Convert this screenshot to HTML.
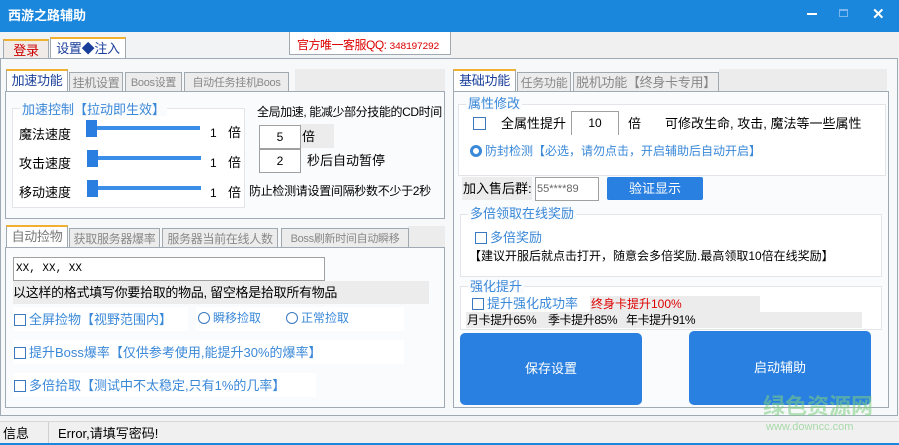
<!DOCTYPE html>
<html><head><meta charset="utf-8"><style>
*{margin:0;padding:0;box-sizing:border-box}
body{width:899px;height:445px;position:relative;overflow:hidden;background:#f0f0f0;font-family:"Liberation Sans","Noto Sans CJK SC",sans-serif;font-size:12px;color:#000}
.a{position:absolute;white-space:nowrap;line-height:1}
.b{position:absolute}
.tab{position:absolute;border:1px solid #a0a8b0;border-bottom:none;background:#ececec;color:#888;font-size:12px;text-align:center;line-height:20px;white-space:nowrap;overflow:hidden;letter-spacing:-0.3px}
.sel{background:#fff;border-top:2px solid #f0b030;color:#1a3f9a;font-size:13px}
.box{position:absolute;border:1px solid #a0aab4;background:#fafbfd}
.grp{position:absolute;border:1px solid #e2e6ea;background:#fff}
.lb{color:#3a88d8}
.cb{display:inline-block;width:12px;height:12px;border:1px solid #3a78c0;vertical-align:-2px;margin-right:3px;background:#fff}
.rd{display:inline-block;width:12px;height:12px;border:1px solid #3a78c0;border-radius:50%;vertical-align:-2px;margin-right:3px}
.sl{position:absolute;height:4px;background:#3a8ee8}
.th{position:absolute;width:11px;height:17px;background:#2a7ee0}
.in{position:absolute;border:1px solid #a0a0a0;background:#fff;text-align:center;line-height:22px}
.btn{position:absolute;background:#2a80e0;color:#fff;border-radius:5px;text-align:center}
</style></head><body>
<div class="b" style="left:0;top:0;width:899px;height:32px;background:#1a86dc"></div>
<div class="a" style="left:8px;top:9px;color:#fff;font-size:13px;font-weight:bold">西游之路辅助</div>
<div class="b" style="left:807px;top:13px;width:10px;height:2px;background:#fff"></div>
<div class="b" style="left:839px;top:9px;width:9px;height:8px;border:1px solid #7cb6ee;border-top-width:2px"></div>
<div class="a" style="left:872px;top:7px;color:#fff;font-size:15px;font-weight:bold">✕</div>
<div class="b" style="left:0;top:32px;width:899px;height:390px;background:#f2f3f5"></div>
<div class="tab" style="left:3px;top:39px;width:46px;height:20px;color:#c00;font-size:13px;background:#f0ebe6;border-top:2px solid #f0b030">登录</div>
<div class="tab sel" style="left:50px;top:37px;width:76px;height:22px;color:#1a3f9a">设置◆注入</div>
<div class="b" style="left:289px;top:32px;width:162px;height:23px;background:#fff;border:1px solid #a0a8b0;border-top:none"></div>
<div class="a" style="left:297px;top:39px;color:#d00;font-size:12px;letter-spacing:-0.5px">官方唯一客服QQ: <span style="font-family:'Liberation Mono',monospace;font-size:10px">348197292</span></div>
<div class="b" style="left:451px;top:32px;width:448px;height:26px;background:#f0f0f0"></div>
<div class="box" style="left:0;top:58px;width:898px;height:358px;background:#f7f8fa"></div>
<!-- left top -->
<div class="b" style="left:295px;top:69px;width:150px;height:22px;background:#ececec"></div>
<div class="tab sel" style="left:6px;top:69px;width:62px;height:23px">加速功能</div>
<div class="tab" style="left:69px;top:72px;width:54px;height:20px">挂机设置</div>
<div class="tab" style="left:125px;top:72px;width:57px;height:20px;font-size:11px">Boos设置</div>
<div class="tab" style="left:184px;top:72px;width:105px;height:20px;font-size:11px">自动任务挂机Boos</div>
<div class="box" style="left:5px;top:91px;width:440px;height:128px"></div>
<div class="grp" style="left:12px;top:108px;width:233px;height:100px"></div>
<div class="a lb" style="left:20px;top:103px;font-size:13px;background:#fafbfd;padding:0 2px">加速控制【拉动即生效】</div>
<div class="a" style="left:19px;top:128px;font-size:13px">魔法速度</div>
<div class="a" style="left:19px;top:157px;font-size:13px">攻击速度</div>
<div class="a" style="left:19px;top:186px;font-size:13px">移动速度</div>
<div class="sl" style="left:86px;top:126px;width:114px"></div><div class="th" style="left:86px;top:120px"></div>
<div class="sl" style="left:87px;top:156px;width:114px"></div><div class="th" style="left:87px;top:150px"></div>
<div class="sl" style="left:87px;top:186px;width:114px"></div><div class="th" style="left:87px;top:180px"></div>
<div class="a" style="left:210px;top:127px">1</div><div class="a" style="left:228px;top:126px;font-size:13px">倍</div>
<div class="a" style="left:210px;top:157px">1</div><div class="a" style="left:228px;top:156px;font-size:13px">倍</div>
<div class="a" style="left:210px;top:187px">1</div><div class="a" style="left:228px;top:186px;font-size:13px">倍</div>
<div class="a" style="left:257px;top:106px;font-size:12px;letter-spacing:-0.4px">全局加速, 能减少部分技能的CD时间</div>
<div class="b" style="left:300px;top:124px;width:34px;height:24px;background:#ececec"></div>
<div class="in" style="left:259px;top:125px;width:42px;height:24px">5</div>
<div class="a" style="left:302px;top:130px;font-size:13px">倍</div>
<div class="in" style="left:259px;top:149px;width:42px;height:24px">2</div>
<div class="a" style="left:307px;top:154px;font-size:13px">秒后自动暂停</div>
<div class="a" style="left:249px;top:185px;font-size:12px;letter-spacing:-0.3px">防止检测请设置间隔秒数不少于2秒</div>
<!-- left bottom -->
<div class="b" style="left:408px;top:226px;width:37px;height:22px;background:#ececec"></div>
<div class="tab sel" style="left:6px;top:225px;width:62px;height:23px;color:#777">自动捡物</div>
<div class="tab" style="left:69px;top:228px;width:91px;height:20px">获取服务器爆率</div>
<div class="tab" style="left:162px;top:228px;width:116px;height:20px">服务器当前在线人数</div>
<div class="tab" style="left:281px;top:228px;width:128px;height:20px;font-size:11px">Boss刷新时间自动瞬移</div>
<div class="box" style="left:5px;top:247px;width:440px;height:161px"></div>
<div class="in" style="left:13px;top:257px;width:312px;height:24px;text-align:left;padding-left:2px;font-family:'Liberation Mono',monospace;font-size:11px">XX, XX, XX</div>
<div class="b" style="left:13px;top:281px;width:416px;height:23px;background:#ececec"></div>
<div class="a" style="left:13px;top:286px;font-size:13px;letter-spacing:-0.3px">以这样的格式填写你要拾取的物品, 留空格是拾取所有物品</div>
<div class="b" style="left:13px;top:307px;width:175px;height:24px;background:#fff"></div>
<div class="b" style="left:196px;top:307px;width:208px;height:24px;background:#fff"></div>
<div class="a lb" style="left:14px;top:313px;font-size:13px"><span class="cb"></span>全屏捡物【视野范围内】</div>
<div class="a lb" style="left:198px;top:312px;font-size:12px"><span class="rd"></span>瞬移捡取</div>
<div class="a lb" style="left:286px;top:312px;font-size:12px"><span class="rd"></span>正常捡取</div>
<div class="b" style="left:13px;top:340px;width:391px;height:24px;background:#fff"></div>
<div class="a lb" style="left:14px;top:346px;font-size:13px"><span class="cb"></span>提升Boss爆率【仅供参考使用,能提升30%的爆率】</div>
<div class="b" style="left:13px;top:373px;width:303px;height:24px;background:#fff"></div>
<div class="a lb" style="left:14px;top:379px;font-size:13px"><span class="cb"></span>多倍拾取【测试中不太稳定,只有1%的几率】</div>
<!-- right -->
<div class="b" style="left:719px;top:69px;width:168px;height:22px;background:#ececec"></div>
<div class="tab sel" style="left:453px;top:69px;width:63px;height:23px">基础功能</div>
<div class="tab" style="left:517px;top:72px;width:54px;height:20px">任务功能</div>
<div class="tab" style="left:573px;top:72px;width:146px;height:20px;font-size:13px">脱机功能【终身卡专用】</div>
<div class="box" style="left:453px;top:91px;width:436px;height:317px"></div>
<div class="grp" style="left:458px;top:104px;width:428px;height:72px"></div>
<div class="a lb" style="left:466px;top:97px;font-size:13px;background:#fafbfd;padding:0 2px">属性修改</div>
<div class="b" style="left:473px;top:117px;width:13px;height:13px;border:1px solid #3a78c0"></div>
<div class="a" style="left:501px;top:117px;font-size:13px">全属性提升</div>
<div class="in" style="left:571px;top:111px;width:48px;height:24px;border-bottom:none">10</div>
<div class="a" style="left:628px;top:117px;font-size:13px">倍</div>
<div class="a" style="left:665px;top:117px;font-size:13px">可修改生命, 攻击, 魔法等一些属性</div>
<div class="a lb" style="left:470px;top:145px;font-size:12px"><span class="rd" style="border:3px solid #3a88d8;background:#fff"></span>防封检测【必选，请勿点击，开启辅助后自动开启】</div>
<div class="b" style="left:462px;top:177px;width:70px;height:23px;background:#ececec"></div>
<div class="a" style="left:463px;top:182px;font-size:13px">加入售后群:</div>
<div class="in" style="left:535px;top:177px;width:64px;height:24px;text-align:left;padding-left:1px;color:#666;font-size:11px">55****89</div>
<div class="btn" style="left:607px;top:177px;width:96px;height:23px;line-height:23px;border-radius:2px;font-size:13px">验证显示</div>
<div class="grp" style="left:460px;top:214px;width:422px;height:63px"></div>
<div class="a lb" style="left:468px;top:207px;font-size:13px;background:#fafbfd;padding:0 2px">多倍领取在线奖励</div>
<div class="a lb" style="left:475px;top:231px;font-size:13px"><span class="cb"></span>多倍奖励</div>
<div class="a" style="left:469px;top:250px;font-size:12px">【建议开服后就点击打开，随意会多倍奖励.最高领取10倍在线奖励】</div>
<div class="grp" style="left:460px;top:286px;width:422px;height:44px"></div>
<div class="a lb" style="left:468px;top:280px;font-size:13px;background:#fafbfd;padding:0 2px">强化提升</div>
<div class="b" style="left:590px;top:296px;width:170px;height:16px;background:#ececec"></div>
<div class="a lb" style="left:472px;top:297px;font-size:13px"><span class="cb"></span>提升强化成功率</div>
<div class="a" style="left:591px;top:298px;color:#d00;font-size:12px">终身卡提升100%</div>
<div class="b" style="left:466px;top:312px;width:396px;height:16px;background:#ececec"></div>
<div class="a" style="left:467px;top:314px;font-size:12px;letter-spacing:-0.4px">月卡提升65% &nbsp;&nbsp;&nbsp;季卡提升85% &nbsp;&nbsp;年卡提升91%</div>
<div class="btn" style="left:460px;top:333px;width:182px;height:72px;line-height:72px;font-size:13px">保存设置</div>
<div class="btn" style="left:689px;top:331px;width:182px;height:74px;line-height:74px;font-size:13px">启动辅助</div>
<div class="a" style="left:763px;top:396px;color:#7dd080;font-size:22px;font-weight:bold;opacity:.55">绿色资源网</div>
<div class="a" style="left:766px;top:422px;color:#8ad08c;font-size:11px;opacity:.7">www.downcc.com</div>
<!-- status -->
<div class="b" style="left:0;top:421px;width:899px;height:1px;background:#d8d8d8"></div>
<div class="a" style="left:3px;top:427px;font-size:13px">信息</div>
<div class="b" style="left:48px;top:422px;width:1px;height:21px;background:#d0d0d0"></div>
<div class="a" style="left:58px;top:427px;font-size:13px">Error,请填写密码!</div>
<div class="b" style="left:0;top:443px;width:899px;height:2px;background:#1a86dc"></div>
</body></html>
